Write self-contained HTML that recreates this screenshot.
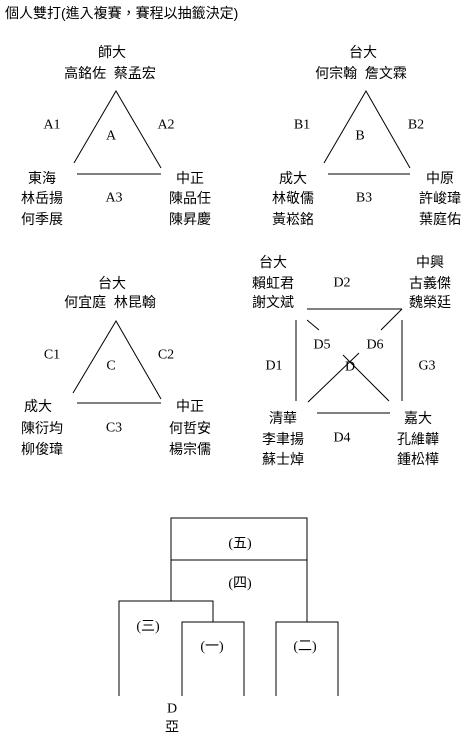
<!DOCTYPE html>
<html><head><meta charset="utf-8"><style>
html,body{margin:0;padding:0;background:#fff;width:464px;height:742px;overflow:hidden}
svg{position:absolute;left:0;top:0}
text{font-family:"Liberation Serif","Noto Sans CJK TC",serif;font-size:14px;fill:#000}
.c{font-family:"Liberation Sans","Noto Sans CJK TC",sans-serif;font-size:14px}
</style></head><body>
<svg width="464" height="742" viewBox="0 0 464 742">
<g stroke="#000" stroke-width="1" fill="none">
<polyline points="74,163 116,91 161,168"/><line x1="77" y1="174" x2="161" y2="174"/>
<polyline points="324,163 366,91 410,168"/><line x1="328" y1="174" x2="410" y2="174"/>
<polyline points="73,393 116,321 161,399"/><line x1="77" y1="403" x2="161" y2="403"/>
<line x1="307" y1="309" x2="402" y2="309"/>
<line x1="402" y1="309" x2="381" y2="330"/>
<line x1="307" y1="320" x2="319" y2="330"/>
<line x1="296" y1="320" x2="296" y2="401"/>
<line x1="402" y1="320" x2="402" y2="401"/>
<line x1="308" y1="402" x2="359" y2="353"/>
<line x1="343" y1="355" x2="389" y2="401"/>
<line x1="317" y1="413" x2="390" y2="413"/>
<polyline points="171,601 171,518 307,518 307,622"/>
<line x1="171" y1="560" x2="307" y2="560"/>
<polyline points="119,696 119,601 213,601 213,622"/>
<polyline points="182,696 182,622 244,622 244,696"/>
<polyline points="276,696 276,622 338,622 338,696"/>
</g>
<g text-anchor="middle" dominant-baseline="central">
<text x="5" y="13" text-anchor="start" class="c">個人雙打(進入複賽，賽程以抽籤決定)</text>
<text class="c" x="112" y="52">師大</text>
<text class="c" x="110" y="73">高銘佐&#160; 蔡孟宏</text>
<text x="52" y="125">A1</text><text x="166" y="125">A2</text><text x="111" y="136">A</text>
<text class="c" x="42" y="178">東海</text><text class="c" x="42" y="198">林岳揚</text><text class="c" x="42" y="219">何季展</text>
<text x="114" y="198">A3</text>
<text class="c" x="190" y="178">中正</text><text class="c" x="190" y="198">陳品任</text><text class="c" x="190" y="219">陳昇慶</text>

<text class="c" x="363" y="52">台大</text>
<text class="c" x="361" y="73">何宗翰&#160; 詹文霖</text>
<text x="302" y="125">B1</text><text x="416" y="125">B2</text><text x="360" y="136">B</text>
<text class="c" x="293" y="178">成大</text><text class="c" x="293" y="198">林敬儒</text><text class="c" x="293" y="219">黃崧銘</text>
<text x="364" y="198">B3</text>
<text class="c" x="440" y="178">中原</text><text class="c" x="440" y="198">許峻瑋</text><text class="c" x="440" y="219">葉庭佑</text>

<text class="c" x="112" y="283">台大</text>
<text class="c" x="110" y="302">何宜庭&#160; 林昆翰</text>
<text x="52" y="355">C1</text><text x="166" y="355">C2</text><text x="111" y="366">C</text>
<text class="c" x="38" y="406">成大</text><text class="c" x="42" y="428">陳衍均</text><text class="c" x="42" y="449">柳俊瑋</text>
<text x="114" y="428">C3</text>
<text class="c" x="190" y="406">中正</text><text class="c" x="190" y="428">何哲安</text><text class="c" x="190" y="449">楊宗儒</text>

<text class="c" x="273" y="262">台大</text><text class="c" x="273" y="283">賴虹君</text><text class="c" x="273" y="302">謝文斌</text>
<text x="342" y="283">D2</text>
<text class="c" x="430" y="262">中興</text><text class="c" x="430" y="283">古義傑</text><text class="c" x="430" y="302">魏榮廷</text>
<text x="322" y="345">D5</text><text x="375" y="345">D6</text>
<text x="274" y="366">D1</text><text x="350" y="367">D</text><text x="427" y="366">G3</text>
<text class="c" x="283" y="418">清華</text><text class="c" x="283" y="439">李聿揚</text><text class="c" x="283" y="459">蘇士焯</text>
<text x="342" y="438">D4</text>
<text class="c" x="418" y="418">嘉大</text><text class="c" x="418" y="439">孔維韡</text><text class="c" x="418" y="459">鍾松樺</text>

<text x="240" y="544">(五)</text>
<text x="240" y="584">(四)</text>
<text x="148" y="627">(三)</text>
<text x="212" y="647">(一)</text>
<text x="305" y="647">(二)</text>
<text x="172" y="709">D</text>
<text x="172" y="728">亞</text>
</g>
</svg>
</body></html>
